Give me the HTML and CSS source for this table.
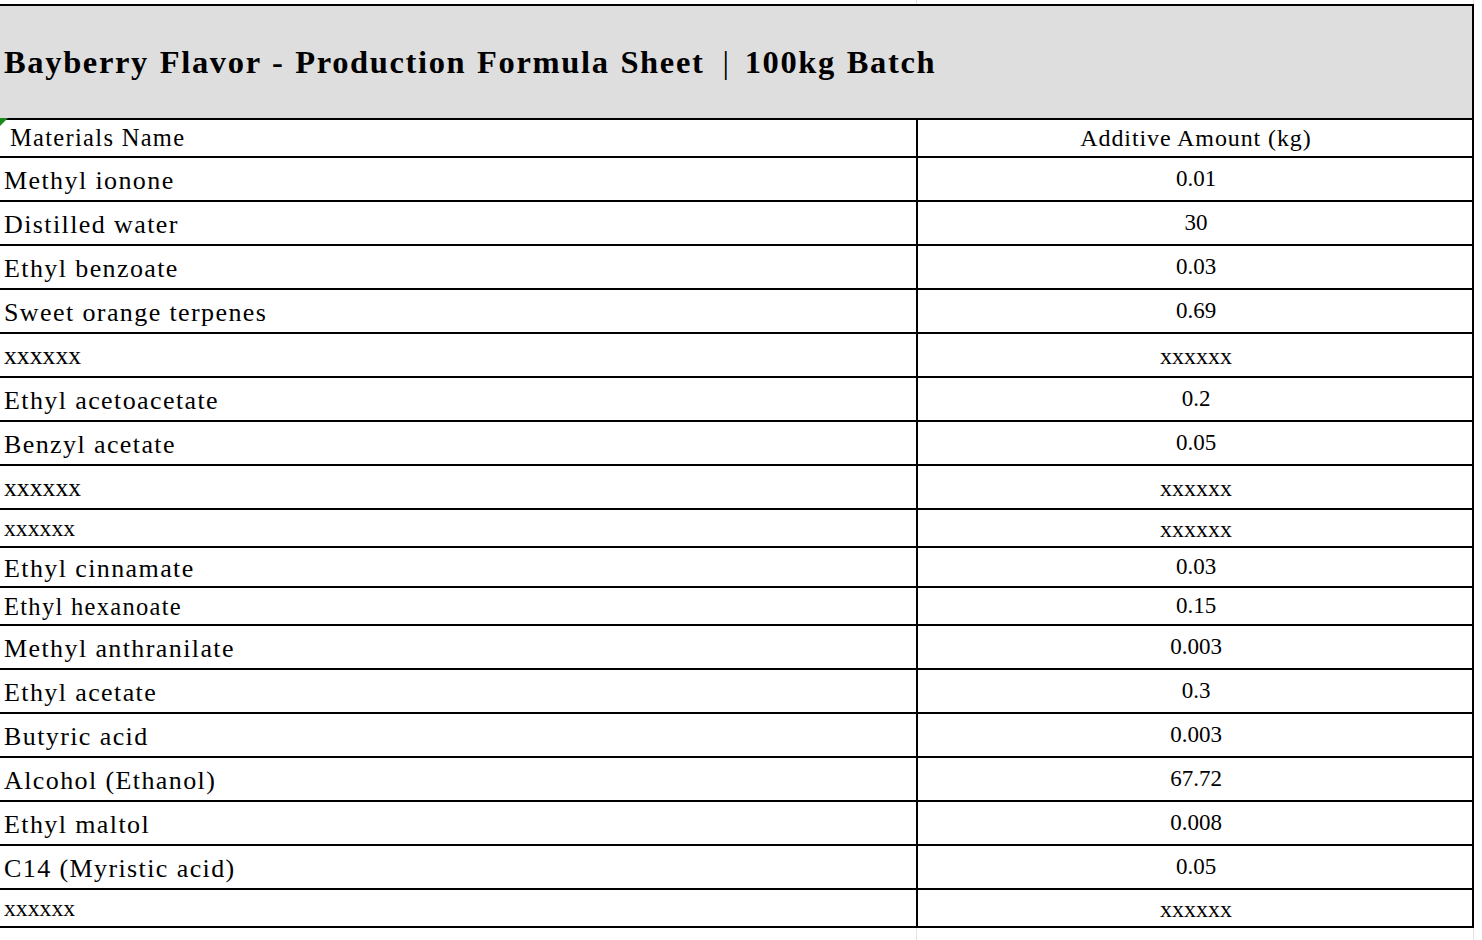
FILE: index.html
```html
<!DOCTYPE html>
<html>
<head>
<meta charset="utf-8">
<link rel="stylesheet" href="styles.css">
</head>
<body>
<div class="grid-strip top"><div class="gc"></div><div class="gc"></div></div>
<div class="sheet">
  <div class="title">Bayberry Flavor - Production Formula Sheet<span class="bar">|</span>100kg Batch</div>
  <div class="c1 h38 head"><span class="tri"></span>Materials Name</div>
  <div class="c2 h38 head2">Additive Amount (kg)</div>

  <div class="c1 h44 nm">Methyl ionone</div><div class="c2 h44 num">0.01</div>
  <div class="c1 h44 nm">Distilled water</div><div class="c2 h44 num">30</div>
  <div class="c1 h44 nm">Ethyl benzoate</div><div class="c2 h44 num">0.03</div>
  <div class="c1 h44 nm">Sweet orange terpenes</div><div class="c2 h44 num">0.69</div>
  <div class="c1 h44 xl">xxxxxx</div><div class="c2 h44 xn">xxxxxx</div>
  <div class="c1 h44 nm">Ethyl acetoacetate</div><div class="c2 h44 num">0.2</div>
  <div class="c1 h44 nm">Benzyl acetate</div><div class="c2 h44 num">0.05</div>
  <div class="c1 h44 xl">xxxxxx</div><div class="c2 h44 xn">xxxxxx</div>
  <div class="c1 h38 xs">xxxxxx</div><div class="c2 h38 xn">xxxxxx</div>
  <div class="c1 h40 nm">Ethyl cinnamate</div><div class="c2 h40 num">0.03</div>
  <div class="c1 h38 nm sm">Ethyl hexanoate</div><div class="c2 h38 num">0.15</div>
  <div class="c1 h44 nm">Methyl anthranilate</div><div class="c2 h44 num">0.003</div>
  <div class="c1 h44 nm">Ethyl acetate</div><div class="c2 h44 num">0.3</div>
  <div class="c1 h44 nm">Butyric acid</div><div class="c2 h44 num">0.003</div>
  <div class="c1 h44 nm">Alcohol (Ethanol)</div><div class="c2 h44 num">67.72</div>
  <div class="c1 h44 nm">Ethyl maltol</div><div class="c2 h44 num">0.008</div>
  <div class="c1 h44 nm">C14 (Myristic acid)</div><div class="c2 h44 num">0.05</div>
  <div class="c1 h38 xs">xxxxxx</div><div class="c2 h38 xn">xxxxxx</div>
</div>
<div class="grid-strip bottom"><div class="gc"></div><div class="gc"></div></div>
</body>
</html>
```
FILE: styles.css
```css
html, body {
  margin: 0;
  padding: 0;
  background: #ffffff;
  overflow: hidden;
}
body {
  width: 1482px;
  height: 940px;
  font-family: "Liberation Serif", "Times New Roman", serif;
  color: #000;
}
.grid-strip {
  display: grid;
  grid-template-columns: 917px 557px;
}
.grid-strip.top { height: 4px; }
.grid-strip.bottom { height: 14px; }
.grid-strip .gc {
  border-right: 1px solid #e4e4e4;
}
.sheet {
  display: grid;
  grid-template-columns: 918px 556px;
  border-top: 2px solid #000;
  width: 1474px;
  box-sizing: border-box;
}
.title {
  grid-column: 1 / span 2;
  box-sizing: border-box;
  height: 114px;
  background: #dedede;
  border-right: 2px solid #000;
  border-bottom: 2px solid #000;
  display: flex;
  align-items: center;
  padding-left: 4px;
  padding-top: 1px;
  font-weight: 700;
  font-size: 32.5px;
  letter-spacing: 1.65px;
  word-spacing: 1px;
  white-space: pre;
}
.title .bar {
  margin: 0 14px 0 18px;
  font-weight: 400;
}
.c1, .c2 {
  box-sizing: border-box;
  border-bottom: 2px solid #000;
  border-right: 2px solid #000;
  display: flex;
  align-items: center;
  white-space: nowrap;
}
.c1 { padding-left: 4px; }
.c2 { justify-content: center; padding-left: 2px; }
.h38 { height: 38px; }
.h40 { height: 40px; }
.h44 { height: 44px; }
.head {
  position: relative;
  padding-left: 10px;
  font-size: 24.5px;
  letter-spacing: 1.3px;
}
.tri {
  position: absolute;
  left: 0;
  top: -2px;
  width: 0;
  height: 0;
  border-top: 8px solid #1a8a1a;
  border-right: 8px solid transparent;
}
.head2 {
  font-size: 24px;
  letter-spacing: 0.9px;
}
.nm {
  font-size: 26px;
  letter-spacing: 1.4px;
  padding-top: 3px;
}
.nm.sm {
  font-size: 24.5px;
  letter-spacing: 1.3px;
  padding-top: 2px;
}
.num {
  font-size: 23px;
  padding-bottom: 1px;
}
.xl { font-size: 25.7px; padding-top: 2px; }
.xs { font-size: 23.7px; }
.xn { font-size: 24px; padding-top: 2px; }
```
